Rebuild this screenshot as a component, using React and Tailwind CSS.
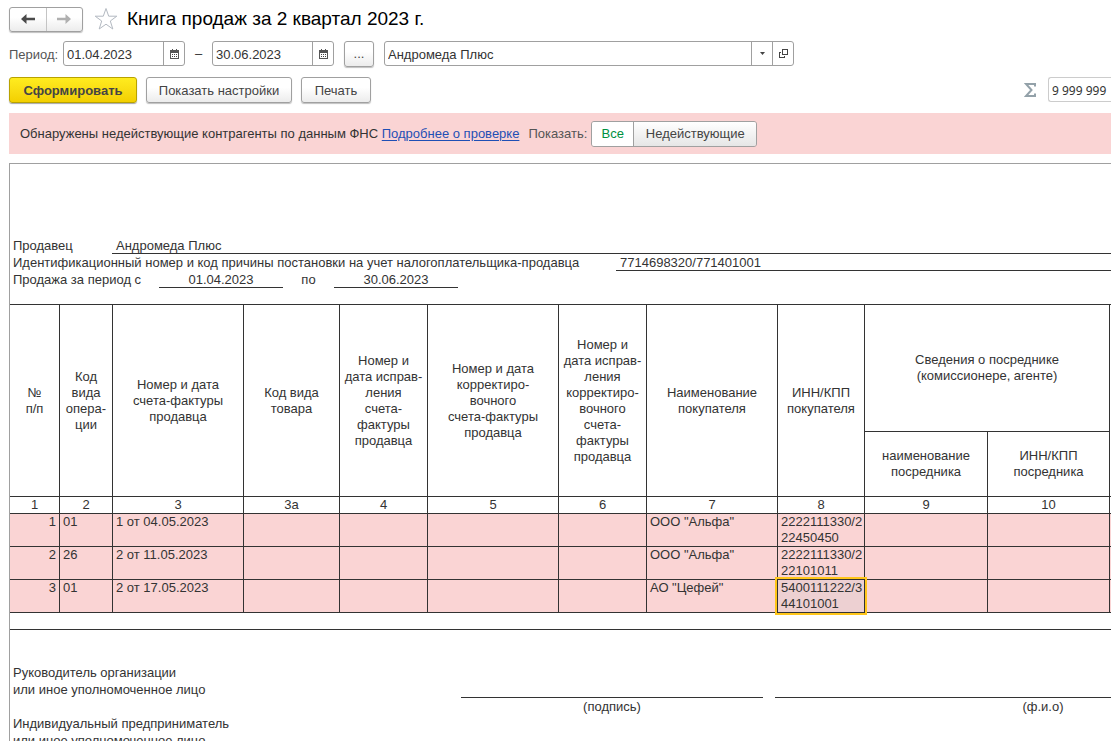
import React, { useState } from 'react';

const rows = [
  { n: 1, code: '01', doc: '1 от 04.05.2023', buyer: 'ООО "Альфа"', inn: '2222111330/222450450' },
  { n: 2, code: '26', doc: '2 от 11.05.2023', buyer: 'ООО "Альфа"', inn: '2222111330/222101011' },
  { n: 3, code: '01', doc: '2 от 17.05.2023', buyer: 'АО "Цефей"', inn: '5400111222/344101001' },
];

const headers = [
  ['№', 'п/п'],
  ['Код', 'вида', 'опера-', 'ции'],
  ['Номер и дата', 'счета-фактуры', 'продавца'],
  ['Код вида', 'товара'],
  ['Номер и', 'дата исправ-', 'ления', 'счета-', 'фактуры', 'продавца'],
  ['Номер и дата', 'корректиро-', 'вочного', 'счета-фактуры', 'продавца'],
  ['Номер и', 'дата исправ-', 'ления', 'корректиро-', 'вочного', 'счета-', 'фактуры', 'продавца'],
  ['Наименование', 'покупателя'],
  ['ИНН/КПП', 'покупателя'],
];

const numbers = ['1', '2', '3', '3а', '4', '5', '6', '7', '8', '9', '10'];

const cell = 'border-r border-b border-[#333] px-0 font-normal';
const button =
  'border border-[#a0a0a0] rounded-[3px] bg-linear-to-b from-white from-40% to-[#ececec] shadow-[0_1px_1px_rgba(0,0,0,0.25)] text-[#444]';

const Lines = ({ items }) =>
  items.map((line) => (
    <span key={line} className="block whitespace-nowrap">{line}</span>
  ));

const CalendarIcon = () => (
  <svg width="9" height="10" viewBox="0 0 9 10" shapeRendering="crispEdges">
    <path d="M0 1h9v9H0z" fill="#555" />
    <path d="M1 4h7v5H1z" fill="#fff" />
    <path d="M2 0h1v2H2zM6 0h1v2H6z" fill="#555" />
    <path d="M2 5h1v1H2zM4 5h1v1H4zM6 5h1v1H6zM2 7h1v1H2zM4 7h1v1H4zM6 7h1v1H6z" fill="#444" />
  </svg>
);

const DateField = ({ id, label, value, onChange }) => (
  <div className="flex h-[25px] w-[122px] border border-[#a0a0a0] rounded-[3px] bg-white">
    <input
      id={id}
      aria-label={label}
      type="text"
      value={value}
      onChange={(e) => onChange(e.target.value)}
      className="min-w-0 flex-1 pt-0.5 pl-[3px] outline-none"
    />
    <button aria-label="Выбрать дату" className="flex w-[21px] items-center justify-center border-l border-[#a0a0a0]">
      <CalendarIcon />
    </button>
  </div>
);

const Header = () => (
  <div className="flex h-[26px] items-center">
    <div className={`${button} flex h-[25px] w-[74px]`}>
      <button aria-label="Назад" className="flex flex-1 items-center justify-center border-r border-[#c4c4c4]">
        <svg width="14" height="10" viewBox="0 0 14 10" fill="#4a4a4a">
          <path d="M0 5L5.5 0V3.8H14V6.2H5.5V10Z" />
        </svg>
      </button>
      <button aria-label="Вперед" className="flex flex-1 items-center justify-center">
        <svg width="14" height="10" viewBox="0 0 14 10" fill="#b0b0b0">
          <path d="M14 5L8.5 0V3.8H0V6.2H8.5V10Z" />
        </svg>
      </button>
    </div>
    <button aria-label="Добавить в избранное" className="ml-[11px]">
      <svg width="24" height="24" viewBox="0 0 24 24" fill="none" stroke="#b3b9c1" strokeWidth="1">
        <path d="M12 1.5L14.7 9.2H22.8L16.3 14L18.8 22L12 17.2L5.2 22L7.7 14L1.2 9.2H9.3Z" />
      </svg>
    </button>
    <h1 className="ml-[9px] text-[19px] leading-6 text-black">Книга продаж за 2 квартал 2023 г.</h1>
  </div>
);

const Filters = () => {
  const [from, setFrom] = useState('01.04.2023');
  const [to, setTo] = useState('30.06.2023');
  const [company, setCompany] = useState('Андромеда Плюс');

  return (
    <div className="mt-2 flex h-[27px] items-center">
      <label htmlFor="from" className="w-[54px] pt-0.5 text-[#555]">Период:</label>
      <DateField id="from" label="Период с" value={from} onChange={setFrom} />
      <span className="w-[27px] text-center">–</span>
      <DateField id="to" label="Период по" value={to} onChange={setTo} />
      <button aria-label="Выбрать период" className={`${button} ml-2.5 h-[26px] w-[30px]`}>...</button>
      <div className="ml-2.5 flex h-[25px] w-[410px] border border-[#a0a0a0] rounded-[3px] bg-white">
        <input
          aria-label="Организация"
          type="text"
          value={company}
          onChange={(e) => setCompany(e.target.value)}
          className="min-w-0 flex-1 pt-0.5 pl-[3px] outline-none"
        />
        <button aria-label="Открыть список" className="flex w-[21px] items-center justify-center border-l border-[#a0a0a0]">
          <svg width="5" height="3" viewBox="0 0 5 3"><path d="M0 0H5L2.5 3Z" fill="#444" /></svg>
        </button>
        <button aria-label="Открыть карточку" className="flex w-[21px] items-center justify-center border-l border-[#a0a0a0]">
          <svg width="9" height="9" viewBox="0 0 9 9" fill="none" stroke="#444" shapeRendering="crispEdges">
            <path d="M3.5 0.5H8.5V5.5H3.5Z" />
            <path d="M2 3.5H0.5V8.5H5.5V7" />
          </svg>
        </button>
      </div>
    </div>
  );
};

const Actions = () => (
  <div className="mt-[9px] flex h-[27px] items-center">
    <button className="h-[26px] w-32 rounded-[3px] border border-[#b8a200] bg-linear-to-b from-[#ffec1f] to-[#f3cf00] pt-0.5 text-[13px] font-bold text-[#444] shadow-[0_1px_1px_rgba(0,0,0,0.35)]">
      Сформировать
    </button>
    <button className={`${button} ml-[9px] h-[26px] w-[146px] pt-0.5`}>Показать настройки</button>
    <button className={`${button} ml-[9px] h-[26px] w-[70px] pt-0.5`}>Печать</button>
    <label htmlFor="sum" className="ml-auto pr-3">
      <svg role="img" aria-label="Сумма" width="12" height="14" viewBox="0 0 12 14" fill="none" stroke="#93a1a9" strokeWidth="2">
        <path d="M11 3.5V1H2L7.5 7L2 13H11V10.5" />
      </svg>
    </label>
    <input
      id="sum"
      type="text"
      readOnly
      value="9 999 999"
      className="h-[25px] w-[63px] rounded-l-[3px] border border-r-0 border-[#ccc] pt-0.5 pl-[3px] font-['Noto_Sans',sans-serif] text-xs outline-none"
    />
  </div>
);

const Warning = () => {
  const [filter, setFilter] = useState('all');
  return (
    <div className="mt-2.5 flex h-[41px] shrink-0 items-center whitespace-nowrap bg-[#fad4d4] pl-[11px]">
      <span>
        Обнаружены недействующие контрагенты по данным ФНС{' '}
        <a href="#check" className="text-[#1f4fb5] underline underline-offset-2">Подробнее о проверке</a>
      </span>
      <span className="ml-[9px] text-[#555]">Показать:</span>
      <div className="ml-1 flex h-[26px] w-[166px] overflow-hidden rounded-[3px] border border-[#a0a0a0]">
        <button
          onClick={() => setFilter('all')}
          className={`w-[42px] border-r border-[#a0a0a0] ${filter === 'all' ? 'bg-white text-[#00913f]' : 'bg-linear-to-b from-white to-[#e6e6e6] text-[#444]'}`}
        >
          Все
        </button>
        <button
          onClick={() => setFilter('inactive')}
          className={`flex-1 ${filter === 'inactive' ? 'bg-white text-[#00913f]' : 'bg-linear-to-b from-white to-[#e6e6e6] text-[#444]'}`}
        >
          Недействующие
        </button>
      </div>
    </div>
  );
};

const SellerInfo = () => (
  <div className="pt-[73px] pb-4 leading-[17px] whitespace-nowrap">
    <div className="flex h-[17px]">
      <span className="w-[102px] pl-[3px]">Продавец</span>
      <span className="flex-1 border-b border-[#333] pl-1">Андромеда Плюс</span>
    </div>
    <div className="flex h-[17px]">
      <span className="w-[606px] pl-[3px]">
        Идентификационный номер и код причины постановки на учет налогоплательщика-продавца
      </span>
      <span className="flex-1 border-b border-[#333] pl-1">7714698320/771401001</span>
    </div>
    <div className="flex h-[17px]">
      <span className="w-[149px] pl-[3px]">Продажа за период с</span>
      <span className="w-[124px] border-b border-[#333] text-center">01.04.2023</span>
      <span className="w-[51px] text-center">по</span>
      <span className="w-[124px] border-b border-[#333] text-center">30.06.2023</span>
    </div>
  </div>
);

const SalesTable = () => (
  <table className="w-full table-fixed border-separate border-spacing-0 border-t border-[#333] leading-4">
    <colgroup>
      <col className="w-[50px]" />
      <col className="w-[53px]" />
      <col className="w-[131px]" />
      <col className="w-[96px]" />
      <col className="w-[88px]" />
      <col className="w-[131px]" />
      <col className="w-[88px]" />
      <col className="w-[131px]" />
      <col className="w-[87px]" />
      <col className="w-[123px]" />
      <col className="w-[122px]" />
      <col />
    </colgroup>
    <thead>
      <tr className="h-[127px]">
        {headers.map((items, i) => (
          <th key={i} rowSpan={2} className={`${cell} text-center`}>
            <Lines items={items} />
          </th>
        ))}
        <th colSpan={2} className={`${cell} text-center`}>
          <Lines items={['Сведения о посреднике', '(комиссионере, агенте)']} />
        </th>
        <td rowSpan={2} className="border-b border-[#333] p-0" />
      </tr>
      <tr className="h-[65px]">
        <th className={`${cell} text-center`}><Lines items={['наименование', 'посредника']} /></th>
        <th className={`${cell} text-center`}><Lines items={['ИНН/КПП', 'посредника']} /></th>
      </tr>
      <tr className="h-[17px]">
        {numbers.map((n) => (
          <th key={n} className={`${cell} py-0 text-center`}>{n}</th>
        ))}
        <td className="border-b border-[#333] p-0" />
      </tr>
    </thead>
    <tbody>
      {rows.map((row) => (
        <tr key={row.n} className="h-[33px] bg-[#fad4d4] align-top">
          <td className={`${cell} py-0 pr-[3px] text-right`}>{row.n}</td>
          <td className={`${cell} py-0 pl-[3px]`}>{row.code}</td>
          <td className={`${cell} py-0 pl-[3px]`}>{row.doc}</td>
          <td className={cell} />
          <td className={cell} />
          <td className={cell} />
          <td className={cell} />
          <td className={`${cell} py-0 pl-[3px]`}>{row.buyer}</td>
          <td className={`${cell} relative py-0 pl-[3px] break-all ${row.n === 3 ? 'bg-[#edd0d2]' : ''}`}>
            {row.inn}
            {row.n === 3 && (
              <span className="pointer-events-none absolute -inset-[3px] border-2 border-[#ffc61a]" />
            )}
          </td>
          <td className={cell} />
          <td className={cell} />
          <td className="border-b border-[#333] p-0" />
        </tr>
      ))}
    </tbody>
  </table>
);

const Signatures = () => (
  <div className="h-[17px] border-b border-[#333]">
    <div className="pt-[51px] leading-[17px] whitespace-nowrap">
      <div className="flex">
        <div className="w-[451px] shrink-0 pl-[3px]">
          <p>Руководитель организации</p>
          <p>или иное уполномоченное лицо</p>
        </div>
        <div className="w-[302px] shrink-0 text-center">
          <div className="h-[34px] border-b border-[#333]" />
          (подпись)
        </div>
        <div className="ml-3 w-[536px] shrink-0 text-center">
          <div className="h-[34px] border-b border-[#333]" />
          (ф.и.о)
        </div>
      </div>
      <div className="pl-[3px]">
        <p>Индивидуальный предприниматель</p>
        <p>или иное уполномоченное лицо</p>
      </div>
    </div>
  </div>
);

export default function App() {
  return (
    <div className="flex h-screen flex-col overflow-hidden bg-white pt-1.5 pl-[9px] font-['Liberation_Sans',Arial,sans-serif] text-[13px] text-[#333]">
      <Header />
      <Filters />
      <Actions />
      <Warning />
      <main className="mt-[9px] min-h-0 flex-1 overflow-hidden border-t border-l border-[#a0a0a0]">
        <SellerInfo />
        <SalesTable />
        <Signatures />
      </main>
    </div>
  );
}
